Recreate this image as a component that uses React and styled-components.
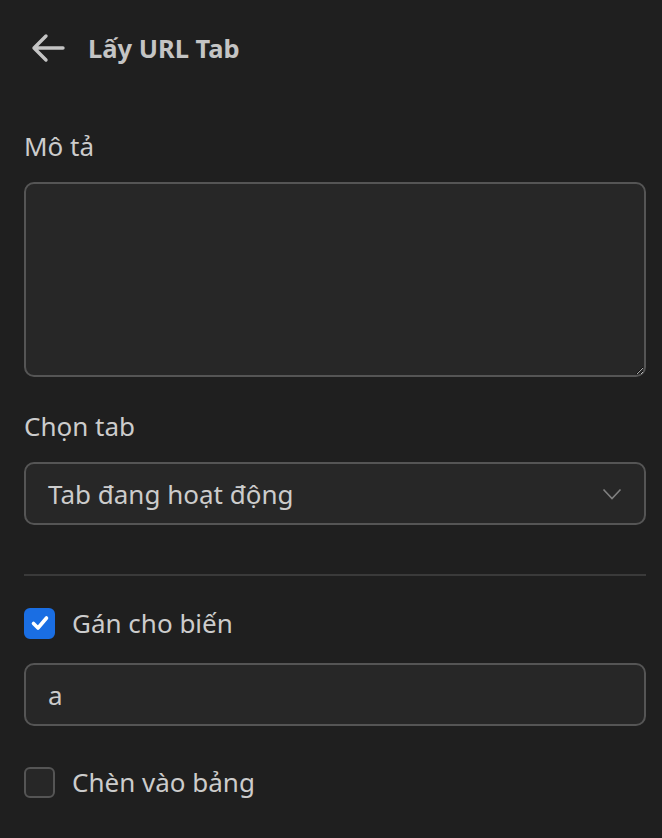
import React, { useState } from "react";
import styled, { createGlobalStyle } from "styled-components";

const GlobalStyle = createGlobalStyle`
  html, body {
    margin: 0;
    padding: 0;
    background: #1f1f1f;
  }
  body {
    font-family: "Noto Sans", "Open Sans", sans-serif;
    color: #cccccc;
  }
`;

const Page = styled.div`
  width: 662px;
  min-height: 838px;
  box-sizing: border-box;
  padding: 0 16px 0 24px;
  background: #1f1f1f;
`;

const Header = styled.div`
  display: flex;
  align-items: center;
  gap: 22px;
  height: 96px;
  padding-left: 6px;
`;

const BackButton = styled.button`
  display: flex;
  align-items: center;
  justify-content: center;
  padding: 0;
  border: none;
  background: none;
  color: #c4c4c4;
  cursor: pointer;
`;

const Title = styled.h1`
  margin: 0;
  font-size: 25.5px;
  font-weight: 700;
  color: #c4c4c4;
`;

const Label = styled.div`
  font-size: 26px;
  color: #cccccc;
  line-height: 32px;
  margin: ${(p) => p.$top || 0}px 0 20px;
`;

const TextArea = styled.textarea`
  display: block;
  width: 100%;
  height: 195px;
  box-sizing: border-box;
  background: #272727;
  border: 2px solid #555555;
  border-radius: 10px;
  resize: vertical;
  outline: none;
  color: #cccccc;
  font: inherit;
  font-size: 26px;
  padding: 14px 22px;
`;

const SelectBox = styled.div`
  display: flex;
  align-items: center;
  justify-content: space-between;
  height: 63px;
  box-sizing: border-box;
  background: #272727;
  border: 2px solid #555555;
  border-radius: 10px;
  padding: 0 22px 0 22px;
  font-size: 26px;
  color: #cccccc;
`;

const Divider = styled.hr`
  border: none;
  border-top: 2px solid #3a3a3a;
  margin: 49px 0 31px;
`;

const CheckRow = styled.label`
  display: flex;
  align-items: center;
  gap: 17px;
  height: 32px;
  font-size: 26px;
  color: #cccccc;
  cursor: pointer;
  margin-bottom: ${(p) => p.$bottom || 0}px;
`;

const Box = styled.span`
  display: flex;
  align-items: center;
  justify-content: center;
  width: 31px;
  height: 31px;
  box-sizing: border-box;
  border-radius: 6px;
  background: ${(p) => (p.$checked ? "#1a6ee3" : "#272727")};
  border: 2px solid ${(p) => (p.$checked ? "#1a6ee3" : "#555555")};
`;

const TextInput = styled.input`
  display: block;
  width: 100%;
  height: 63px;
  box-sizing: border-box;
  background: #272727;
  border: 2px solid #555555;
  border-radius: 10px;
  outline: none;
  color: #cccccc;
  font: inherit;
  font-size: 26px;
  padding: 0 22px;
  margin-bottom: 40px;
`;

function Checkbox({ checked, onChange, children, bottom }) {
  return (
    <CheckRow $bottom={bottom} onClick={onChange}>
      <Box $checked={checked}>
        {checked && (
          <svg width="22" height="22" viewBox="0 0 22 22">
            <path
              d="M4.5 11.5 L9 16 L17.5 6"
              fill="none"
              stroke="#ffffff"
              strokeWidth="3.6"
              strokeLinecap="round"
              strokeLinejoin="round"
            />
          </svg>
        )}
      </Box>
      {children}
    </CheckRow>
  );
}

export default function App() {
  const [assign, setAssign] = useState(true);
  const [insert, setInsert] = useState(false);
  const [name, setName] = useState("a");

  return (
    <Page>
      <GlobalStyle />
      <Header>
        <BackButton aria-label="Quay lại">
          <svg width="36" height="32" viewBox="0 0 36 32">
            <path
              d="M33 16 H4 M16 4 L4 16 L16 28"
              fill="none"
              stroke="currentColor"
              strokeWidth="3.4"
              strokeLinecap="round"
              strokeLinejoin="round"
            />
          </svg>
        </BackButton>
        <Title>Lấy URL Tab</Title>
      </Header>

      <Label $top={34}>Mô tả</Label>
      <TextArea />

      <Label $top={33}>Chọn tab</Label>
      <SelectBox>
        <span>Tab đang hoạt động</span>
        <svg width="20" height="12" viewBox="0 0 20 12">
          <path
            d="M1.5 1.5 L10 10.5 L18.5 1.5"
            fill="none"
            stroke="#808080"
            strokeWidth="1.6"
          />
        </svg>
      </SelectBox>

      <Divider />

      <Checkbox checked={assign} onChange={() => setAssign(!assign)} bottom={24}>
        Gán cho biến
      </Checkbox>
      <TextInput value={name} onChange={(e) => setName(e.target.value)} />

      <Checkbox checked={insert} onChange={() => setInsert(!insert)}>
        Chèn vào bảng
      </Checkbox>
    </Page>
  );
}
